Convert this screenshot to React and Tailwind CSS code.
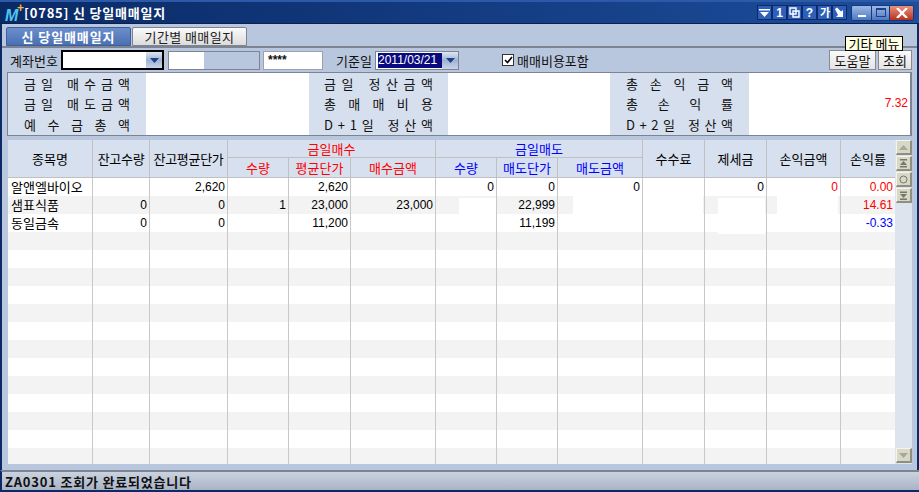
import React from 'react';

const cols = 'grid-cols-[85px_57px_78px_61px_62px_85px_61px_61px_85px_62px_62px_74px_54px]';

const rows = [
  { name: '알앤엘바이오', v: ['', '2,620', '', '2,620', '', '0', '0', '0', '', '0', '0', '0.00'], c: { 10: 'text-[#f00]', 11: 'text-[#f00]' } },
  { name: '샘표식품', v: ['0', '0', '1', '23,000', '23,000', '', '22,999', '', '', '', '', '14.61'], c: { 11: 'text-[#f00]' } },
  { name: '동일금속', v: ['0', '0', '', '11,200', '', '', '11,199', '', '', '', '', '-0.33'], c: { 11: 'text-[#00f]' } },
];

// 16 rows, only the first three hold data
const allRows = Array.from({ length: 16 }, (_, i) => rows[i] || null);

const Spread = ({ text, className = '' }) => (
  <div className={`flex justify-between items-center h-[21px] ${className}`}>
    {text.split('').map((ch, i) =>
      ch === ' ' ? <span key={i} className="w-[4px]" /> : <span key={i}>{ch}</span>
    )}
  </div>
);

const DropArrow = ({ className = '' }) => (
  <div className={`w-[16px] flex items-center justify-center bg-gradient-to-b from-[#dfe6f2] via-[#9db3d6] to-[#c8d4e8] ${className}`}>
    <svg width="9" height="5" viewBox="0 0 9 5"><path d="M0 0h9L4.500 5z" fill="#1f3f86" /></svg>
  </div>
);

const TitleBtn = ({ children }) => (
  <div className="w-[15px] h-[15px] bg-[#2f5fb8] border border-[#0b2a6a] flex items-center justify-center text-white text-[12px] font-bold leading-none">
    {children}
  </div>
);

const ScrollBtn = ({ children }) => (
  <div className="w-[16px] h-[15px] bg-[#d8d8c8] border-t border-l border-[#f4f4ec] border-r-2 border-b-2 border-r-[#8f8f80] border-b-[#8f8f80] flex items-center justify-center">
    {children}
  </div>
);

const SummaryLabels = ({ items, w }) => (
  <div className={`bg-[#d6dfed] flex flex-col justify-start text-[13px] text-[#111] ${w}`}>
    {items.map((t) => <Spread key={t} text={t} />)}
  </div>
);

const App = () => {
  return (
    <div className="w-[919px] h-[492px] overflow-hidden flex flex-col bg-[#b9c7de] font-['Noto_Sans_CJK_KR','Liberation_Sans',sans-serif] text-black relative">
      {/* title bar */}
      <div className="h-[24px] shrink-0 bg-gradient-to-r from-[#0a2a66] to-[#1d4e9c] border-t-2 border-[#2c5aa8] border-b border-b-[#0a2050] flex items-center pl-[5px] pr-[5px]">
        <div className="relative w-[19px] h-[18px]">
          <span className="absolute left-0 bottom-[-2px] text-[16px] leading-none font-bold italic text-[#4fc4f0] font-['Liberation_Sans']">M</span>
          <span className="absolute right-0 top-[-2px] text-[12px] leading-none font-bold text-[#f5b93a] font-['Liberation_Sans']">+</span>
        </div>
        <span className="text-white text-[13px] font-bold leading-none whitespace-pre tracking-[0.8px]">[0785] 신 당일매매일지</span>
        <div className="ml-auto flex items-center">
          <TitleBtn>
            <svg width="11" height="10" viewBox="0 0 11 10"><path d="M0 1h11v1.500H0zM1 4h9L5.500 9z" fill="#fff" /></svg>
          </TitleBtn>
          <TitleBtn><span className="font-['Liberation_Sans']">1</span></TitleBtn>
          <TitleBtn>
            <svg width="11" height="11" viewBox="0 0 11 11" fill="none" stroke="#fff" strokeWidth="1.4"><path d="M1 1h6v6H1zM4 4h6v6H4z" /></svg>
          </TitleBtn>
          <TitleBtn><span className="font-['Liberation_Sans']">?</span></TitleBtn>
          <TitleBtn><span className="text-[11px] tracking-[-1px]">가</span></TitleBtn>
          <TitleBtn>
            <svg width="11" height="11" viewBox="0 0 11 11"><path d="M1 2l2-1.500 4 4L9 3v7H2l2-2z" fill="#fff" /></svg>
          </TitleBtn>
          <div className="ml-[4px] flex h-[16px] rounded-[2px] overflow-hidden border border-[#123a80]">
            <div className="w-[19px] bg-gradient-to-b from-[#9db8e4] to-[#4f78c0] flex items-end justify-center pb-[3px]">
              <div className="w-[8px] h-[2px] bg-white" />
            </div>
            <div className="w-[19px] bg-gradient-to-b from-[#9db8e4] to-[#4f78c0] flex items-center justify-center border-x border-[#123a80]">
              <div className="w-[10px] h-[9px] border border-[#1d3f88] border-t-2" />
            </div>
            <div className="w-[23px] bg-gradient-to-b from-[#e8907c] to-[#b82c1c] flex items-center justify-center">
              <svg width="12" height="10" viewBox="0 0 12 10" fill="none" stroke="#fff" strokeWidth="2.400"><path d="M1 0l10 10M11 0L1 10" /></svg>
            </div>
          </div>
        </div>
      </div>

      {/* body */}
      <div className="flex-1 min-h-0 flex flex-col border-l-2 border-l-[#0b2a66] border-r-2 border-r-[#0b2a66] pb-[6px]">
        {/* tabs */}
        <div className="h-[24px] shrink-0 flex items-end gap-[1px] pl-[4px] border-b-2 border-[#7c8494]">
          <div className="w-[125px] h-[19px] rounded-t-[2px] bg-gradient-to-b from-[#6c8fcb] to-[#4a70b4] border border-[#3d5f9c] text-white text-[13px] font-bold tracking-[0.9px] flex items-center justify-center leading-none whitespace-pre">신 당일매매일지</div>
          <div className="w-[115px] h-[19px] rounded-t-[2px] bg-gradient-to-b from-[#fafafa] to-[#dcdcdc] border border-[#7c8494] text-[#222] text-[13px] tracking-[0.4px] flex items-center justify-center leading-none whitespace-pre">기간별 매매일지</div>
        </div>

        {/* query row */}
        <div className="h-[24px] shrink-0 flex items-center text-[13px] leading-none text-[#111] pr-[5px]">
          <span className="ml-[8px] w-[51px]">계좌번호</span>
          <div className="w-[103px] h-[20px] border-2 border-black bg-white flex justify-end">
            <DropArrow />
          </div>
          <div className="ml-[4px] w-[92px] h-[19px] border border-[#7c8494] flex">
            <div className="w-[35px] bg-white" />
          </div>
          <div className="ml-[3px] w-[60px] h-[19px] bg-white border border-[#9aa2b0] flex items-center pl-[4px] font-['Liberation_Sans'] text-[12px] font-bold">****</div>
          <span className="ml-[13px] w-[39px]">기준일</span>
          <div className="w-[84px] h-[19px] bg-white border border-[#7c8494] flex justify-between">
            <div className="ml-[2px] my-[1px] w-[64px] bg-[#0a0a80] text-white text-[12px] flex items-center font-['Liberation_Sans'] whitespace-nowrap overflow-hidden">2011/03/21</div>
            <DropArrow />
          </div>
          <div className="ml-[43px] w-[12px] h-[12px] bg-white border border-[#333] flex items-center justify-center">
            <svg width="9" height="8" viewBox="0 0 9 8" fill="none" stroke="#000" strokeWidth="1.600"><path d="M1 4l2.500 2.500L8 1" /></svg>
          </div>
          <span className="ml-[3px]">매매비용포함</span>
          <div className="ml-auto flex gap-[2px]">
            <div className="w-[47px] h-[20px] bg-gradient-to-b from-[#fafafa] to-[#e4e4e4] border border-[#8a8a8a] flex items-center justify-center">도움말</div>
            <div className="w-[34px] h-[20px] bg-gradient-to-b from-[#fafafa] to-[#e4e4e4] border border-[#8a8a8a] flex items-center justify-center">조회</div>
          </div>
        </div>

        {/* summary panel */}
        <div className="ml-[5px] mr-[5px] h-[64px] shrink-0 border border-[#7c8494] border-r-2 flex">
          <SummaryLabels w="w-[138px] px-[16px]" items={['금일 매수금액', '금일 매도금액', '예수금총액']} />
          <div className="w-[163px] bg-white" />
          <SummaryLabels w="w-[139px] px-[15px]" items={['금일 정산금액', '총매매비용', 'D+1일 정산액']} />
          <div className="w-[162px] bg-white" />
          <SummaryLabels w="w-[139px] px-[16px]" items={['총손익금액', '총손익률', 'D+2일 정산액']} />
          <div className="flex-1 bg-white flex items-center justify-end pr-[2px] pb-[2px] text-[#f00] text-[12px] font-['Liberation_Sans']">7.32</div>
        </div>

        {/* grid */}
        <div className="mt-[4px] ml-[6px] mr-[5px] flex-1 min-h-0 flex overflow-hidden">
          <div className="w-[887px] shrink-0 flex flex-col">
            <div className={`grid ${cols} grid-rows-[18px_19px] shrink-0 bg-[#d7e0ee] text-[13px] leading-none border-b border-[#c0c0c0]`}>
              <div className="row-span-2 border-r border-[#c0c0c0] flex items-center justify-center">종목명</div>
              <div className="row-span-2 border-r border-[#c0c0c0] flex items-center justify-center tracking-[-0.3px]">잔고수량</div>
              <div className="row-span-2 border-r border-[#c0c0c0] flex items-center justify-center tracking-[-0.3px] whitespace-nowrap">잔고평균단가</div>
              <div className="col-span-3 border-r border-b border-[#c0c0c0] flex items-center justify-center text-[#f00]">금일매수</div>
              <div className="col-span-3 border-r border-b border-[#c0c0c0] flex items-center justify-center text-[#00f]">금일매도</div>
              <div className="row-span-2 border-r border-[#c0c0c0] flex items-center justify-center">수수료</div>
              <div className="row-span-2 border-r border-[#c0c0c0] flex items-center justify-center">제세금</div>
              <div className="row-span-2 border-r border-[#c0c0c0] flex items-center justify-center">손익금액</div>
              <div className="row-span-2 flex items-center justify-center">손익률</div>
              <div className="border-r border-[#c0c0c0] flex items-center justify-center text-[#f00]">수량</div>
              <div className="border-r border-[#c0c0c0] flex items-center justify-center text-[#f00]">평균단가</div>
              <div className="border-r border-[#c0c0c0] flex items-center justify-center text-[#f00]">매수금액</div>
              <div className="border-r border-[#c0c0c0] flex items-center justify-center text-[#00f]">수량</div>
              <div className="border-r border-[#c0c0c0] flex items-center justify-center text-[#00f]">매도단가</div>
              <div className="border-r border-[#c0c0c0] flex items-center justify-center text-[#00f]">매도금액</div>
            </div>
            <div className="relative flex-1 min-h-0 overflow-hidden">
              {allRows.map((r, i) => (
                <div key={i} className={`grid ${cols} h-[18px] ${i % 2 ? 'bg-[#f3f3f3]' : 'bg-white'}`}>
                  <div className="relative z-[2] border-r border-[#c8c8c8] pl-[3px] pb-[1px] flex items-center text-[13px] leading-none whitespace-nowrap">{r?.name}</div>
                  {Array.from({ length: 12 }, (_, j) => (
                    <div key={j} className={`relative z-[2] flex items-center justify-end pr-[2px] pb-[1px] text-[12px] leading-none font-['Liberation_Sans'] ${j < 11 ? 'border-r border-[#c8c8c8]' : ''} ${r?.c[j] || ''}`}>
                      {r?.v[j]}
                    </div>
                  ))}
                </div>
              ))}
              {/* blanked-out cells in the second row */}
              <div className="absolute z-[1] bg-white left-[451px] top-[20px] w-[37px] h-[16px]" />
              <div className="absolute z-[1] bg-white left-[565px] top-[18px] w-[130px] h-[18px]" />
              <div className="absolute z-[1] bg-white left-[710px] top-[20px] w-[47px] h-[36px]" />
              <div className="absolute z-[1] bg-white left-[769px] top-[18px] w-[61px] h-[18px]" />
            </div>
          </div>
          <div className="flex-1 bg-[#dde4ee] flex flex-col pl-[1px] pb-[1px]">
            <ScrollBtn>
              <svg width="9" height="5" viewBox="0 0 9 5"><path d="M4.500 0L9 5H0z" fill="#a8a898" /></svg>
            </ScrollBtn>
            <div className="h-[1px]" />
            <ScrollBtn>
              <svg width="9" height="9" viewBox="0 0 9 9"><path d="M1 0h7v1.500H1zM4.500 2L8 6H1zM1 7h7v1.500H1z" fill="#77776a" /></svg>
            </ScrollBtn>
            <div className="h-[1px]" />
            <ScrollBtn>
              <svg width="9" height="9" viewBox="0 0 9 9" fill="none" stroke="#77776a"><circle cx="4.500" cy="4.500" r="3.500" /></svg>
            </ScrollBtn>
            <div className="h-[1px]" />
            <ScrollBtn>
              <svg width="9" height="9" viewBox="0 0 9 9"><path d="M1 .5h7V2H1zM1 3h7L4.500 7zM1 7.500h7V9H1z" fill="#77776a" /></svg>
            </ScrollBtn>
            <div className="mt-auto">
              <ScrollBtn>
                <svg width="9" height="5" viewBox="0 0 9 5"><path d="M0 0h9L4.500 5z" fill="#a8a898" /></svg>
              </ScrollBtn>
            </div>
          </div>
        </div>
      </div>

      {/* status bar */}
      <div className="h-[22px] shrink-0 bg-gradient-to-b from-[#cbd3e0] to-[#a9b3c5] border-t-2 border-[#7c8494] border-b-2 border-b-[#0b2a66] border-l-2 border-l-[#0b2a66] flex items-center pl-[3px] text-[13px] font-bold leading-none tracking-[0.8px] text-[#111] whitespace-pre">
        ZA0301 조회가 완료되었습니다
      </div>

      {/* tooltip over the toolbar */}
      <div className="absolute left-[845px] top-[36px] w-[58px] h-[15px] bg-[#ffffe1] border border-black text-[13px] leading-none flex items-center justify-center">기타 메뉴</div>
    </div>
  );
};

export default App;
